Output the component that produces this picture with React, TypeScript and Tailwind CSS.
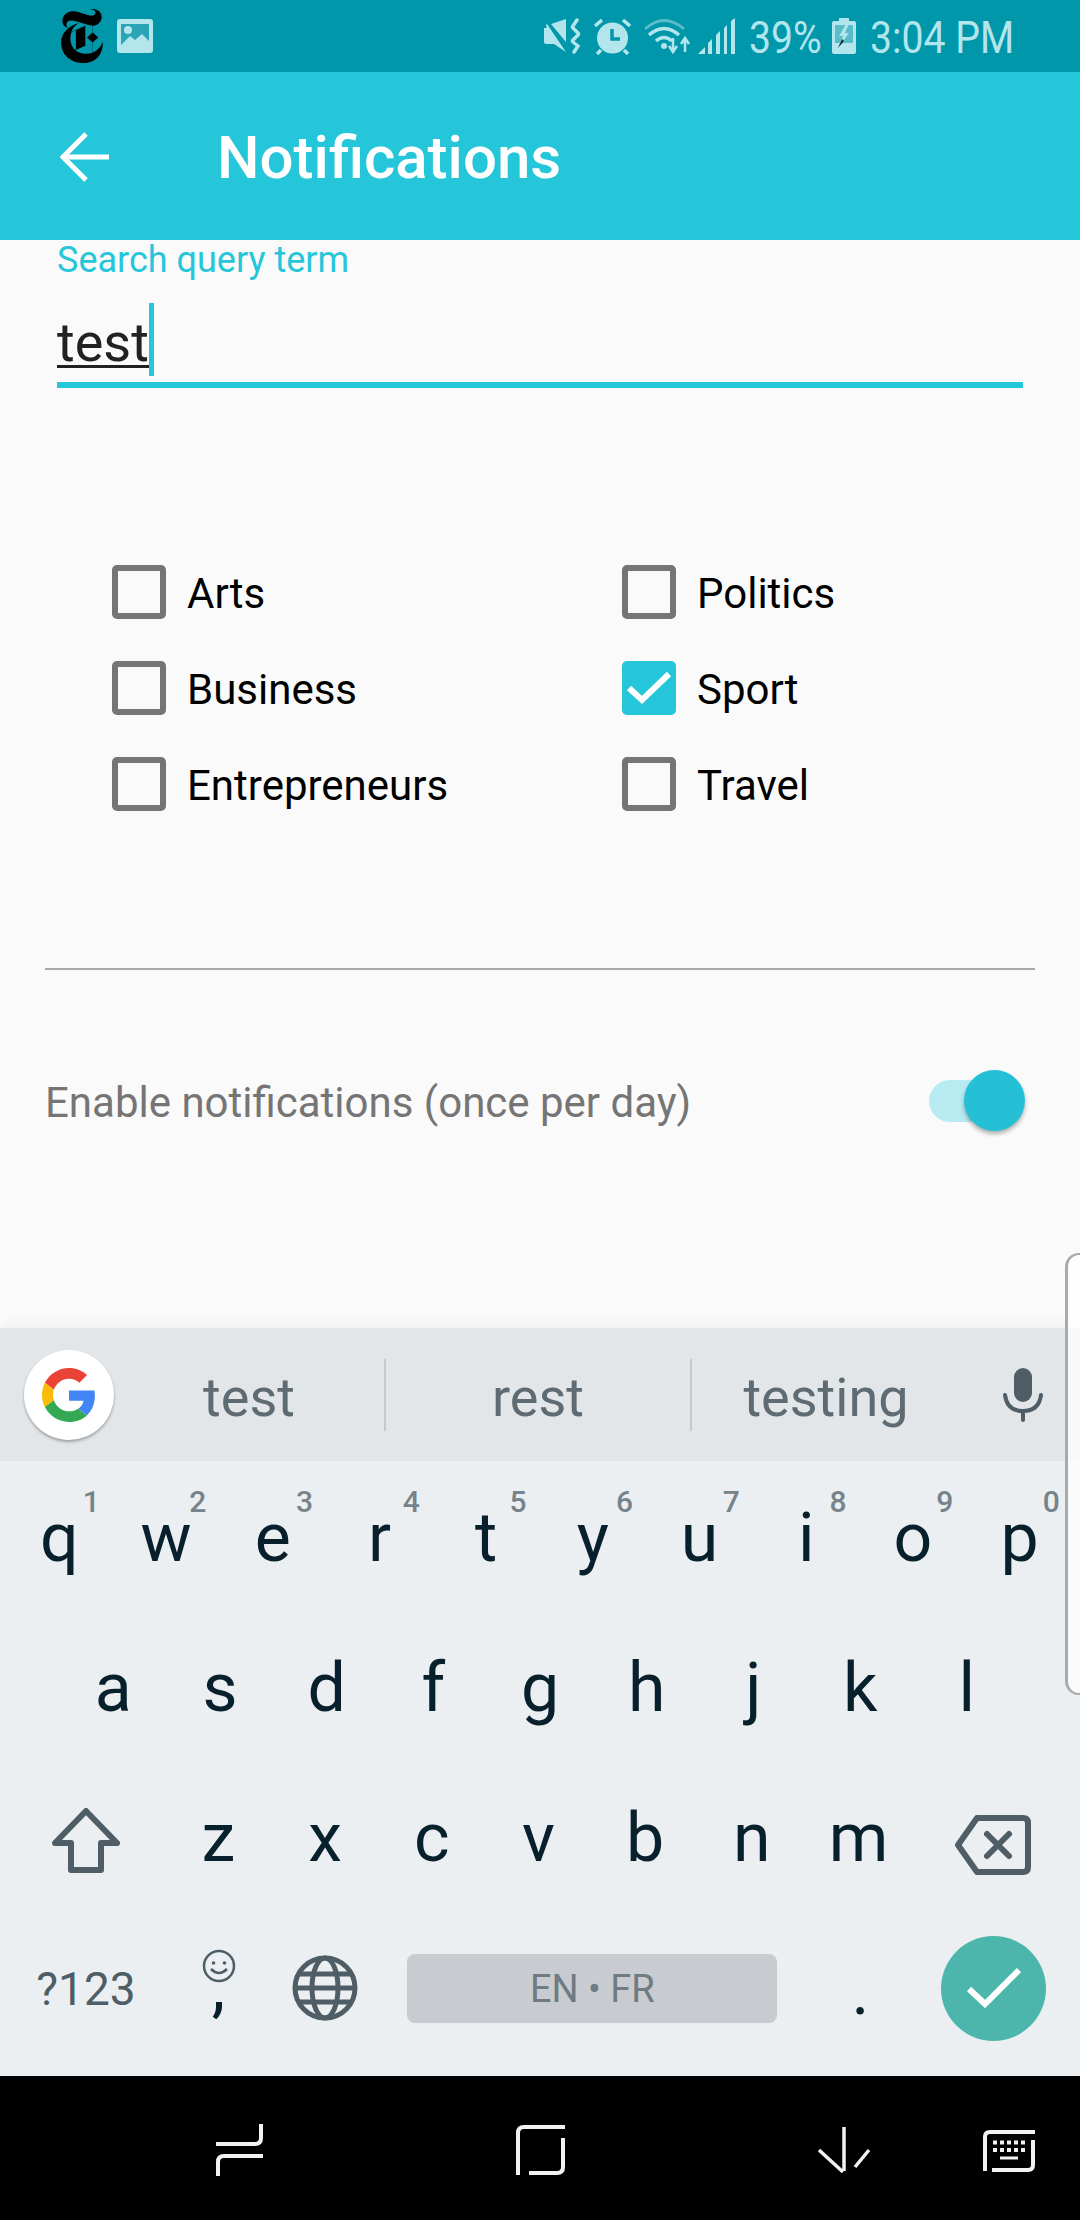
import React from 'react';
import { SiNewyorktimes } from 'react-icons/si';

const rowOne = [
  ['q', '1'],
  ['w', '2'],
  ['e', '3'],
  ['r', '4'],
  ['t', '5'],
  ['y', '6'],
  ['u', '7'],
  ['i', '8'],
  ['o', '9'],
  ['p', '0'],
];
const rowTwo = ['a', 's', 'd', 'f', 'g', 'h', 'j', 'k', 'l'];
const rowThree = ['z', 'x', 'c', 'v', 'b', 'n', 'm'];

function Key({ label, hint }: { label: string; hint?: string }) {
  return (
    <div className="relative flex h-full w-[106.7px] items-center justify-center text-[68px] text-[#07202c]">
      {label}
      {hint && (
        <span className="absolute right-[13px] top-[21px] text-[30px] leading-[36px] font-medium text-[#76838b]">
          {hint}
        </span>
      )}
    </div>
  );
}

function Checkbox({ label, checked }: { label: string; checked?: boolean }) {
  return (
    <div className="flex h-[54px] items-center gap-[21px]">
      {checked ? (
        <div className="flex h-[54px] w-[54px] items-center justify-center rounded-[5px] bg-[#26c6da]">
          <svg width="46" height="34" viewBox="0 0 46 34" fill="none">
            <path d="M3 17 L16 29 L43 3" stroke="#fff" strokeWidth="6" />
          </svg>
        </div>
      ) : (
        <div className="h-[54px] w-[54px] rounded-[5px] border-[6px] border-[#757575]" />
      )}
      <span className="pt-[3px] text-[42px] leading-[54px] text-black">{label}</span>
    </div>
  );
}

function StatusBar() {
  return (
    <div className="flex h-[72px] items-center bg-[#0097ab] pl-[55px] pr-[68px] text-[#b2e5ec]">
      <SiNewyorktimes className="h-[54px] w-[54px] text-black" />
      <svg className="ml-[8px]" width="36" height="34" viewBox="0 0 36 34">
        <rect width="36" height="34" rx="3" fill="#b2e5ec" />
        <rect x="4" y="5" width="28" height="24" fill="#2ba4b6" />
        <circle cx="11" cy="11" r="4" fill="#b2e5ec" />
        <path d="M4 26 L13 17 L18 21 L25 15 L32 22 V29 H4 Z" fill="#b2e5ec" />
      </svg>
      <div className="flex-1" />
      {/* mute + vibrate */}
      <svg width="38" height="36" viewBox="0 0 38 36" fill="none">
        <path d="M22 1 V24 L7 6 Z" fill="#b2e5ec" />
        <path d="M0 10 H3 Q1 7 3 6 L22 34 L10 26 H2 Q0 26 0 24 Z" fill="#b2e5ec" />
        <path d="M33 2 L29 8 Q28 9 29 10 L34 15 Q35 16 34 17 L29 22 Q28 23 29 24 L34 28 L30 34" stroke="#b2e5ec" strokeWidth="3.5" strokeLinecap="round" />
      </svg>
      {/* alarm */}
      <svg className="ml-[12px]" width="37" height="37" viewBox="0 0 37 37" fill="none">
        <circle cx="18.5" cy="20" r="15.5" fill="#b2e5ec" />
        <path d="M18 11 V21 H26" stroke="#0097ab" strokeWidth="3.5" />
        <path d="M1 8 L8 2 M36 8 L29 2 M7 32 L3 36 M30 32 L34 36" stroke="#b2e5ec" strokeWidth="3.5" />
      </svg>
      {/* wifi with data arrows */}
      <svg className="ml-[13px]" width="48" height="36" viewBox="0 0 48 36" fill="none">
        <path d="M1 11 Q20 -6 40 11" stroke="#58bcca" strokeWidth="3" />
        <path d="M5 17 Q20 4 35 17" stroke="#b2e5ec" strokeWidth="3.5" />
        <path d="M12 23 Q20 16 28 23" stroke="#b2e5ec" strokeWidth="3.5" />
        <circle cx="20" cy="28" r="3" fill="#b2e5ec" />
        <path d="M29 20 V33 M25 28 L29 34 L33 28" stroke="#b2e5ec" strokeWidth="2.5" />
        <path d="M41 34 V22 M37 26 L41 20 L45 26" stroke="#b2e5ec" strokeWidth="2.5" />
      </svg>
      {/* signal */}
      <svg className="ml-[6px]" width="37" height="36" viewBox="0 0 37 36">
        <path d="M0 36 L7 29 V36 Z" fill="#b2e5ec" />
        <path d="M10 36 V25 L14 21 V36 Z M18 36 V17 L22 13 V36 Z M26 36 V10 L29 7 V36 Z M33 36 V3 L37 0 V36 Z" fill="#b2e5ec" />
      </svg>
      <span className="ml-[14px] mt-[3px] w-[70px] origin-left scale-x-[.89] whitespace-nowrap text-[44px] leading-[44px]">39%</span>
      {/* charging battery */}
      <svg className="ml-[13px]" width="24" height="36" viewBox="0 0 24 36">
        <path d="M7 0 H17 V3 H22 Q24 3 24 5 V34 Q24 36 22 36 H2 Q0 36 0 34 V5 Q0 3 2 3 H7 Z" fill="#b2e5ec" />
        <rect x="3" y="7" width="18" height="18" fill="#58bcca" />
        <path d="M14 6 L7 18 H11 L6 30 L17 15 H13 L17 6 Z" fill="#b2e5ec" />
        <path d="M10 21 L6 30 L12 23 Z" fill="#0b2a30" />
      </svg>
      <span className="ml-[14px] mt-[3px] w-[142px] origin-left scale-x-[.89] whitespace-nowrap text-[44px] leading-[44px]">3:04 PM</span>
    </div>
  );
}

function NavBar() {
  return (
    <div className="flex h-[144px] items-center bg-black">
      <svg width="1080" height="144" viewBox="0 2076 1080 144" fill="none" stroke="#f2f2f2" strokeWidth="4">
        <path d="M261 2124 V2138 Q261 2144 255 2144 H216 M263 2156 H224 Q218 2156 218 2162 V2176" />
        <path d="M518 2175 V2133 Q518 2127 524 2127 H565 M563 2138 V2167 Q563 2173 557 2173 H529" />
        <path d="M844 2127 V2171 M819 2150 L843 2172 M869 2150 L855 2167" strokeWidth="3.5" />
        <path d="M985 2171 V2137 Q985 2132 990 2132 H1035 M1033 2140 V2165 Q1033 2170 1028 2170 H992" />
        <path d="M993 2142.5 H1026 M993 2150 H1026" strokeWidth="4" strokeDasharray="4 3" />
        <path d="M1000 2158 H1018" strokeWidth="3" />
      </svg>
    </div>
  );
}

function GoogleLogo() {
  return (
    <svg width="54" height="54" viewBox="0 0 48 48">
      <path fill="#EA4335" d="M24 9.5c3.54 0 6.71 1.22 9.21 3.6l6.85-6.85C35.9 2.38 30.47 0 24 0 14.62 0 6.51 5.38 2.56 13.22l7.98 6.19C12.43 13.72 17.74 9.5 24 9.5z" />
      <path fill="#4285F4" d="M46.98 24.55c0-1.57-.15-3.09-.38-4.55H24v9.02h12.94c-.58 2.96-2.26 5.48-4.78 7.18l7.73 6c4.51-4.18 7.09-10.36 7.09-17.65z" />
      <path fill="#FBBC05" d="M10.53 28.59c-.48-1.45-.76-2.99-.76-4.59s.27-3.14.76-4.59l-7.98-6.19C.92 16.46 0 20.12 0 24c0 3.88.92 7.54 2.56 10.78l7.97-6.19z" />
      <path fill="#34A853" d="M24 48c6.48 0 11.93-2.13 15.89-5.81l-7.73-6c-2.15 1.45-4.92 2.3-8.16 2.3-6.26 0-11.57-4.22-13.47-9.91l-7.98 6.19C6.51 42.62 14.62 48 24 48z" />
    </svg>
  );
}

function Keyboard() {
  return (
    <div className="shadow-[0_-6px_10px_rgba(0,0,0,0.03)]">
      <div className="flex h-[133px] items-center bg-[#e2e6e9] text-[54px] text-[#5f6b73]">
        <div className="ml-[24px] flex h-[90px] w-[90px] items-center justify-center rounded-full bg-white shadow-[0_2px_3px_rgba(0,0,0,0.3)]">
          <GoogleLogo />
        </div>
        <div className="flex h-[72px] w-[272px] items-center justify-center border-r-[2px] border-[#c4c9cc] pt-[5px]">test</div>
        <div className="flex h-[72px] w-[306px] items-center justify-center border-r-[2px] border-[#c4c9cc] pt-[5px]">rest</div>
        <div className="flex h-[72px] w-[268px] items-center justify-center pt-[5px]">testing</div>
        <svg className="ml-[43px]" width="40" height="54" viewBox="0 0 40 54" fill="none">
          <rect x="11" y="0" width="18" height="34" rx="9" fill="#4f5e66" />
          <path d="M2 27 Q4 43 20 43 Q36 43 38 27 M20 43 V52" stroke="#4f5e66" strokeWidth="4" strokeLinecap="round" />
        </svg>
      </div>

      <div className="h-[615px] bg-[#ebeff2] pt-[2px]">
        <div className="flex h-[150px] pl-[6px]">
          {rowOne.map(([label, hint]) => (
            <Key key={label} label={label} hint={hint} />
          ))}
        </div>
        <div className="flex h-[150px] pl-[60px]">
          {rowTwo.map((label) => (
            <Key key={label} label={label} />
          ))}
        </div>
        <div className="flex h-[150px] pl-[7px]">
          <div className="flex h-full w-[158px] items-center justify-center pt-[6px]">
            <svg width="68" height="66" viewBox="0 0 68 66" fill="none">
              <path d="M34 3 L65 35 H49 V62 H19 V35 H3 Z" stroke="#4f5e66" strokeWidth="6" strokeLinejoin="round" />
            </svg>
          </div>
          {rowThree.map((label) => (
            <Key key={label} label={label} />
          ))}
          <div className="flex h-full w-[162px] items-center justify-center pt-[14px]">
            <svg width="76" height="60" viewBox="0 0 76 60" fill="none">
              <path d="M22 3 H68 Q73 3 73 8 V52 Q73 57 68 57 H22 L3 30 Z" stroke="#4f5e66" strokeWidth="6" strokeLinejoin="round" />
              <path d="M32 19 L54 41 M54 19 L32 41" stroke="#4f5e66" strokeWidth="6" strokeLinecap="round" />
            </svg>
          </div>
        </div>
        <div className="flex h-[150px] items-center pl-[7px]">
          <div className="w-[158px] pt-[3px] text-center text-[46px] text-[#4f5e66]">?123</div>
          <div className="relative flex h-full w-[106.7px] items-center justify-center text-[68px] text-[#07202c]">
            <span className="pb-[4px]">,</span>
            <svg className="absolute left-[37px] top-[36px]" width="34" height="34" viewBox="0 0 34 34" fill="none" stroke="#4f5e66" strokeWidth="2.5">
              <circle cx="17" cy="17" r="15" />
              <circle cx="11.5" cy="14" r="1.8" fill="#4f5e66" stroke="none" />
              <circle cx="22.5" cy="14" r="1.8" fill="#4f5e66" stroke="none" />
              <path d="M9 20 Q17 28 25 20" />
            </svg>
          </div>
          <div className="flex w-[106.7px] justify-center">
            <svg width="66" height="66" viewBox="0 0 66 66" fill="none" stroke="#4f5e66" strokeWidth="5">
              <circle cx="33" cy="33" r="30" />
              <ellipse cx="33" cy="33" rx="13" ry="30" />
              <path d="M7 19 H59 M7 47 H59 M3 33 H63" />
            </svg>
          </div>
          <div className="ml-[29px] flex h-[69px] w-[370px] items-center justify-center rounded-[8px] bg-[#c8ccd0] pt-[2px] text-[38px] text-[#6f7b82]">
            EN • FR
          </div>
          <div className="flex w-[166px] justify-center pt-[6px] text-[68px] text-[#07202c]">.</div>
          <div className="ml-[-2px] flex h-[105px] w-[105px] items-center justify-center rounded-full bg-[#4db6ac]">
            <svg width="54" height="42" viewBox="0 0 54 42" fill="none">
              <path d="M2 22 L18 37 L52 3" stroke="#fff" strokeWidth="6" />
            </svg>
          </div>
        </div>
      </div>
    </div>
  );
}

export default function App() {
  return (
    <div className="relative flex h-[2220px] w-[1080px] flex-col overflow-hidden bg-[#fafafa] font-['Roboto',sans-serif]">
      <StatusBar />
      <header className="flex h-[168px] items-center bg-[#26c6da] text-white">
        <svg className="ml-[60px] mt-[2px]" width="50" height="50" viewBox="0 0 50 50" fill="none">
          <path d="M49 25 H4 M26 2 L3 25 L26 48" stroke="#fff" strokeWidth="5" />
        </svg>
        <h1 className="ml-[107px] mt-[3px] whitespace-nowrap text-[60px] font-medium">Notifications</h1>
      </header>

      <main className="flex-1">
        <div className="px-[57px]">
          <div className="pt-[1px] text-[36px] leading-[39px] text-[#26c6da]">Search query term</div>
          <div className="mt-[23px] flex h-[73px] items-start">
            <span className="mt-[17px] border-b-[3px] border-[#212121] text-[54px] leading-[45px] text-[#212121]">test</span>
            <span className="h-[73px] w-[5px] bg-[#26c6da]" />
          </div>
          <div className="mt-[6px] h-[6px] bg-[#26c6da]" />
        </div>

        <div className="ml-[112px] mt-[177px] grid grid-cols-[510px_1fr] gap-y-[42px]">
          <Checkbox label="Arts" />
          <Checkbox label="Politics" />
          <Checkbox label="Business" />
          <Checkbox label="Sport" checked />
          <Checkbox label="Entrepreneurs" />
          <Checkbox label="Travel" />
        </div>

        <div className="mx-[45px] mt-[157px] h-[2px] bg-[#aaaaaa]" />

        <div className="mt-[100px] flex h-[61px] items-center justify-between pl-[45px] pr-[75px]">
          <span className="pt-[3px] text-[42px] text-[#757575]">Enable notifications (once per day)</span>
          <div className="relative h-[42px] w-[76px] rounded-full bg-[#b8ebf1]">
            <div className="absolute right-[-20px] top-[-10px] h-[61px] w-[61px] rounded-full bg-[#26c0d6] shadow-[0_3px_4px_rgba(0,0,0,0.3)]" />
          </div>
        </div>
      </main>

      <Keyboard />
      <NavBar />

      {/* edge panel handle */}
      <div className="absolute right-0 top-[1253px] h-[442px] w-[15px] rounded-l-[14px] border-y-[2px] border-l-[3px] border-[#aaaaaa] bg-white/75" />
    </div>
  );
}
